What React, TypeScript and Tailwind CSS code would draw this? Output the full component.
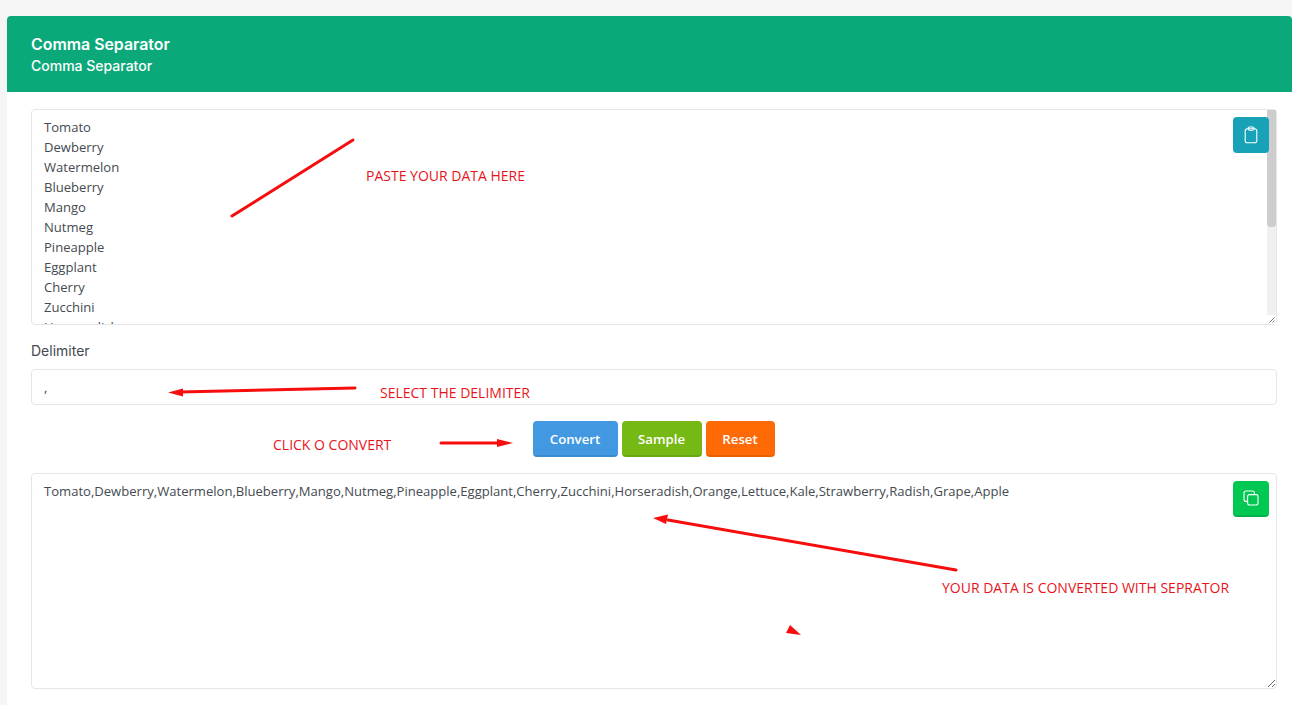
import React from 'react';

const fruits = ['Tomato', 'Dewberry', 'Watermelon', 'Blueberry', 'Mango', 'Nutmeg', 'Pineapple', 'Eggplant', 'Cherry', 'Zucchini', 'Horseradish', 'Orange', 'Lettuce', 'Kale', 'Strawberry', 'Radish', 'Grape', 'Apple'];

const notes = [
   { text: 'PASTE YOUR DATA HERE', cls: 'left-[366px] top-[167px]' },
   { text: 'SELECT THE DELIMITER', cls: 'left-[380px] top-[384px]' },
   { text: 'CLICK O CONVERT', cls: 'left-[273px] top-[436px]' },
   { text: 'YOUR DATA IS CONVERTED WITH SEPRATOR', cls: 'left-[942px] top-[579px]' },
];

const ClipboardIcon = () => (
   <svg width="18" height="18" viewBox="0 0 18 18" fill="none" stroke="currentColor" strokeWidth="1.1">
      <rect x="3.2" y="2.8" width="11.6" height="14" rx="2.4" />
      <rect x="6" y="1" width="6" height="3.2" rx="1.6" />
   </svg>
);

const CopyIcon = () => (
   <svg width="16" height="16" viewBox="0 0 16 16" fill="none" stroke="currentColor" strokeWidth="1.1">
      <rect x="4.6" y="4.6" width="10.4" height="10.4" rx="2" />
      <path d="M11.4 4.6V3a2 2 0 0 0-2-2H3a2 2 0 0 0-2 2v6.4a2 2 0 0 0 2 2h1.6" />
   </svg>
);

const areaCls = "block w-full h-[216px] rounded border border-[#e4e6e8] bg-white px-3 py-[7px] font-['Open_Sans',sans-serif] text-[13.07px] leading-5 text-[#444a50] outline-none";

export default function App() {
   return (
      <div className="relative h-[705px] overflow-hidden bg-[#f5f5f5] pt-4 pl-[7px] font-['Inter',sans-serif]">
         <div className="h-full rounded-t bg-white">
            {/* Cabeçalho */}
            <div className="flex h-[76px] flex-col justify-center rounded-t bg-[#0ba979] pt-[2px] pl-6 text-white">
               <h1 className="text-[15.9px] leading-[21px] font-semibold">Comma Separator</h1>
               <p className="text-[14px] leading-[22px] font-medium">Comma Separator</p>
            </div>

            <div className="px-6 pt-[17px] pr-[15px]">
               <div className="relative">
                  <textarea readOnly value={fruits.join('\n')} className={`${areaCls} resize overflow-y-hidden`} />
                  {/* Barra de rolagem */}
                  <div className="absolute top-px right-px bottom-px flex w-[9px] flex-col bg-[#f0f0f0]">
                     <div className="h-[117px] rounded-b-sm bg-[#cdcdcd]"></div>
                     <div className="mt-auto flex h-[9px] items-end justify-end bg-white pr-px pb-px">
                        <svg width="6" height="6" viewBox="0 0 6 6" stroke="#777" strokeWidth="1">
                           <path d="M5.500 .5L.5 5.500M5.500 3.500L3.500 5.500" />
                        </svg>
                     </div>
                  </div>
                  <button className="absolute top-2 right-2 flex h-9 w-9 items-center justify-center rounded bg-[#17a2b8] text-white">
                     <ClipboardIcon />
                  </button>
               </div>

               <label className="mt-4 block text-[14px] leading-[20px] text-[#444a50]">Delimiter</label>
               <input readOnly value="," className="mt-2 block h-9 w-full rounded border border-[#e4e6e8] bg-white px-3 font-['Open_Sans',sans-serif] text-[13.07px] text-[#444a50] outline-none" />

               <div className="mt-4 flex justify-center gap-1 pr-[1px] font-['Open_Sans',sans-serif] text-[13.2px] font-semibold text-white">
                  <button className="h-9 w-[85px] rounded border-b-2 border-[#3a8bd0] bg-[#4299e1] pt-1">Convert</button>
                  <button className="h-9 w-[80px] rounded border-b-2 border-[#6aa812] bg-[#76b814] pt-1">Sample</button>
                  <button className="h-9 w-[69px] rounded border-b-2 border-[#e86000] bg-[#ff6a07] pt-1">Reset</button>
               </div>

               <div className="relative mt-4">
                  <textarea readOnly value={fruits.join(',')} className={`${areaCls} resize`} />
                  <button className="absolute top-2 right-2 flex h-9 w-9 items-center justify-center rounded border-b-2 border-[#04b04b] bg-[#00c853] text-white">
                     <CopyIcon />
                  </button>
               </div>
            </div>
         </div>

         {/* Anotações em vermelho por cima da página */}
         {notes.map((n) => (
            <span key={n.text} className={`absolute whitespace-nowrap font-['Open_Sans',sans-serif] text-[14px] leading-[18px] text-[#e8141c] ${n.cls}`}>{n.text}</span>
         ))}
         <svg className="pointer-events-none absolute top-0 left-0" width="1292" height="705" fill="none" stroke="#f60d0d" strokeWidth="3" strokeLinecap="round">
            <path d="M232 216L353 140" />
            <path d="M180 392L355 388" />
            <path d="M441 443L500 443" />
            <path d="M668 520L956 570" />
            <g fill="#f60d0d" stroke="none">
               <path d="M168 392.500L183 388.500V396.500Z" />
               <path d="M513 443L497 439V447Z" />
               <path d="M653 518L668 514.500L666 524Z" />
               <path d="M790 625L801 635L786 633Z" />
            </g>
         </svg>
      </div>
   );
}
